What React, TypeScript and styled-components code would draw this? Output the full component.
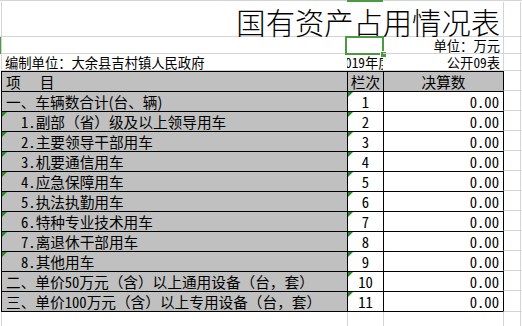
import React, { FC } from "react";
import styled, { createGlobalStyle, css } from "styled-components";

const GRID = "#d4d4d4";
const INK = "#000";
const SHADE = "#c0c0c0";
const PICK = "#4a9a41";

const GlobalStyle = createGlobalStyle`
  body {
    margin: 0;
    background: #fff;
    font-family: "Noto Sans CJK SC", "Noto Sans", sans-serif;
    color: ${INK};
  }
`;

const Sheet = styled.div`
  display: grid;
  grid-template-columns: 1px 346px 36px 120px 17px 1fr;
  grid-template-rows: 2px 35px 17px 17px repeat(11, 20px) 21px 1fr;
  width: 522px;
  height: 326px;
  overflow: hidden;
  background: #fff;
`;

const EdgeCell = styled.div<{ $active?: boolean }>`
  background: ${(p) => (p.$active ? PICK : "#fff")};
  border-top: 1px solid ${(p) => (p.$active ? PICK : GRID)};
`;

type Line = "none" | "light" | "dark";

const Blank = styled.div<{ $left?: Line; $bottom?: boolean; $mark?: boolean }>`
  box-sizing: border-box;
  background: ${(p) => (p.$mark ? PICK : "#fff")};
  border-left: ${(p) =>
    p.$left === "dark"
      ? `1px solid ${INK}`
      : p.$left === "light"
      ? `1px solid ${GRID}`
      : "none"};
  border-bottom: ${(p) => (p.$bottom ? `1px solid ${GRID}` : "none")};
`;

const TitleCell = styled.div`
  grid-column: span 3;
  box-sizing: border-box;
  display: flex;
  align-items: flex-end;
  justify-content: flex-end;
  padding: 0 3px 0 0;
  border-left: 1px solid ${GRID};
  border-bottom: 1px solid ${GRID};
  font-size: 29.3px;
  font-weight: 300;
  line-height: 1;
  white-space: nowrap;
`;

const NoteCell = styled.div<{ $align?: "left" | "center" | "right"; $left?: boolean }>`
  position: relative;
  box-sizing: border-box;
  display: flex;
  align-items: center;
  justify-content: ${(p) =>
    p.$align === "right" ? "flex-end" : p.$align === "center" ? "center" : "flex-start"};
  padding: ${(p) =>
    p.$align === "right" ? "1px 3px 0 0" : p.$align === "center" ? "1px 0 0 0" : "1px 0 0 3px"};
  border-left: ${(p) => (p.$left ? `1px solid ${GRID}` : "none")};
  border-bottom: 1px solid ${GRID};
  font-size: 13.3px;
  line-height: 1;
  white-space: nowrap;
  overflow: ${(p) => (p.$align === "center" ? "hidden" : "visible")};
`;

const Selection = styled.div`
  position: absolute;
  top: -1px;
  left: -2px;
  right: -1px;
  bottom: -2px;
  border: 2px solid ${PICK};
  pointer-events: none;
`;

const Handle = styled.div`
  position: absolute;
  right: -5px;
  bottom: -5px;
  width: 5px;
  height: 5px;
  background: ${PICK};
  border: 1px solid #fff;
`;

const TableCell = styled.div<{ $shade?: boolean; $flag?: boolean; $last?: boolean }>`
  position: relative;
  box-sizing: border-box;
  display: flex;
  align-items: center;
  border-left: 1px solid ${INK};
  border-top: 1px solid ${INK};
  border-bottom: ${(p) => (p.$last ? `1px solid ${INK}` : "none")};
  background: ${(p) => (p.$shade ? SHADE : "#fff")};
  font-size: 14.67px;
  line-height: 1;
  white-space: nowrap;
  padding-top: 1px;

  ${(p) =>
    p.$flag &&
    css`
      &::before {
        content: "";
        position: absolute;
        top: 0;
        left: 0;
        border-top: 5px solid #1f8a2a;
        border-right: 5px solid transparent;
      }
    `}
`;

const ItemCell = styled(TableCell)<{ $indent?: boolean }>`
  padding-left: ${(p) => (p.$indent ? "19px" : "4px")};
`;

const LineCell = styled(TableCell)`
  justify-content: center;
  font-feature-settings: "hwid";
`;

const AmountCell = styled(TableCell)<{ $head?: boolean }>`
  justify-content: ${(p) => (p.$head ? "center" : "flex-end")};
  padding-right: ${(p) => (p.$head ? "0" : "4px")};
  font-feature-settings: "hwid";
`;

const HeadLabel = styled.span`
  letter-spacing: 19px;
`;

const Half = styled.span`
  font-feature-settings: "hwid";
`;

interface Item {
  name: string;
  no: number;
  indent?: boolean;
}

const items: Item[] = [
  { name: "一、车辆数合计(台、辆)", no: 1 },
  { name: "1.副部（省）级及以上领导用车", no: 2, indent: true },
  { name: "2.主要领导干部用车", no: 3, indent: true },
  { name: "3.机要通信用车", no: 4, indent: true },
  { name: "4.应急保障用车", no: 5, indent: true },
  { name: "5.执法执勤用车", no: 6, indent: true },
  { name: "6.特种专业技术用车", no: 7, indent: true },
  { name: "7.离退休干部用车", no: 8, indent: true },
  { name: "8.其他用车", no: 9, indent: true },
  { name: "二、单价50万元（含）以上通用设备（台，套）", no: 10 },
  { name: "三、单价100万元（含）以上专用设备（台，套）", no: 11 },
];

// digits and dots take the narrow half-width form, as the sheet font does
const splitLatin = (text: string) =>
  text.split(/([0-9.]+)/).map((part, i) =>
    /^[0-9.]+$/.test(part) ? <Half key={i}>{part}</Half> : <React.Fragment key={i}>{part}</React.Fragment>
  );

const App: FC = () => {
  return (
    <>
      <GlobalStyle />
      <Sheet>
        {/* column header edge */}
        <EdgeCell />
        <EdgeCell />
        <EdgeCell $active />
        <EdgeCell />
        <EdgeCell />
        <EdgeCell />

        {/* title */}
        <Blank $bottom />
        <TitleCell>国有资产占用情况表</TitleCell>
        <Blank $left="light" $bottom />
        <Blank $left="light" $bottom />

        {/* unit row */}
        <Blank $mark />
        <NoteCell $left />
        <NoteCell>
          <Selection>
            <Handle />
          </Selection>
        </NoteCell>
        <NoteCell $align="right">单位：万元</NoteCell>
        <Blank $left="light" $bottom />
        <Blank $left="light" $bottom />

        {/* org row */}
        <Blank />
        <NoteCell $left>编制单位：大余县吉村镇人民政府</NoteCell>
        <NoteCell $align="center">{splitLatin("2019年度")}</NoteCell>
        <NoteCell $align="right">{splitLatin("公开09表")}</NoteCell>
        <Blank $left="light" $bottom />
        <Blank $left="light" $bottom />

        {/* table head */}
        <Blank />
        <ItemCell $shade>
          <HeadLabel>项目</HeadLabel>
        </ItemCell>
        <LineCell $shade>栏次</LineCell>
        <AmountCell $shade $head>
          决算数
        </AmountCell>
        <Blank $left="dark" $bottom />
        <Blank $left="light" $bottom />

        {items.map((item, i) => {
          const last = i === items.length - 1;
          return (
            <React.Fragment key={item.no}>
              <Blank />
              <ItemCell $shade $indent={item.indent} $flag={item.indent} $last={last}>
                {splitLatin(item.name)}
              </ItemCell>
              <LineCell $flag $last={last}>
                {item.no}
              </LineCell>
              <AmountCell $last={last}>0.00</AmountCell>
              <Blank $left="dark" $bottom />
              <Blank $left="light" $bottom />
            </React.Fragment>
          );
        })}

        {/* empty row below */}
        <Blank />
        <Blank $left="light" />
        <Blank $left="light" />
        <Blank $left="light" />
        <Blank $left="light" />
        <Blank $left="light" />
      </Sheet>
    </>
  );
};

export default App;
